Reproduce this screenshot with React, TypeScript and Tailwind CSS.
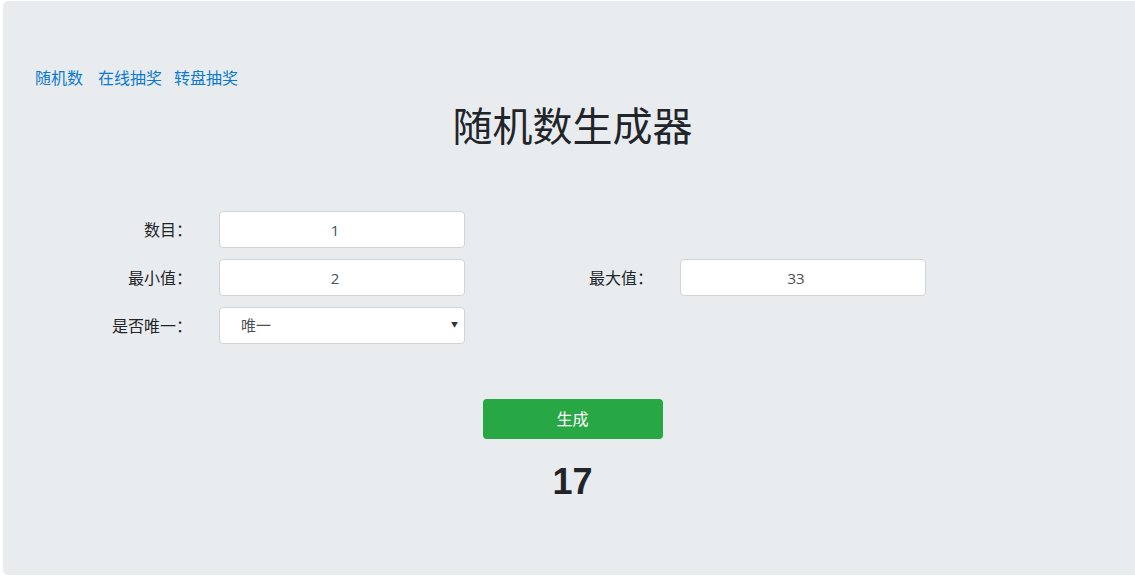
import React from "react";

const sans = { fontFamily: '"Open Sans", "Noto Sans CJK SC", sans-serif' };

function Field({ label, value, labelW }: { label: string; value: string; labelW: string }) {
  return (
    <div className="flex items-center">
      <div className={`${labelW} text-right text-[16px] text-[#212529] pr-[27px]`}>{label}</div>
      <input
        readOnly
        value={value}
        className="w-[246px] h-[37px] bg-white border border-[#ced4da] rounded-[4px] text-center pr-[14px] text-[15px] text-[#495057] outline-none"
      />
    </div>
  );
}

export default function App() {
  return (
    <div className="w-[1135px] h-[583px] bg-white overflow-hidden" style={sans}>
      <div className="ml-[3px] mt-[1px] w-[1139px] h-[574px] bg-[#e9ecef] rounded-[5px] pt-[65px] px-[32px]">
        <nav className="flex text-[16px] text-[#0b7ad1] leading-[24px]">
          <a className="mr-[15px]">随机数</a>
          <a className="mr-[12px]">在线抽奖</a>
          <a>转盘抽奖</a>
        </nav>
        <h1 className="mt-[10px] text-center text-[40px] leading-[48px] text-[#212529] font-normal" style={{ fontFamily: '"Noto Sans CJK SC", sans-serif' }}>
          随机数生成器
        </h1>
        <div className="mt-[63px] flex flex-col gap-[11px]">
          <Field label="数目：" value="1" labelW="w-[184px]" />
          <div className="flex items-center">
            <Field label="最小值：" value="2" labelW="w-[184px]" />
            <Field label="最大值：" value="33" labelW="w-[215px]" />
          </div>
          <div className="flex items-center">
            <div className="w-[184px] text-right text-[16px] text-[#212529] pr-[27px]">是否唯一：</div>
            <div className="relative w-[246px] h-[37px] bg-white border border-[#ced4da] rounded-[4px] flex items-center pl-[21px] text-[15px] text-[#495057]">
              唯一
              <span className="absolute right-[6px] top-[12px] text-[7px] text-[#333]">▼</span>
            </div>
          </div>
        </div>
        <div className="mt-[55px] flex justify-center">
          <button className="w-[180px] h-[40px] bg-[#28a745] text-white text-[16px] rounded-[4px]">生成</button>
        </div>
        <div
          className="mt-[20px] text-center text-[36px] font-bold leading-[46px] text-[#212529]"
          style={{ fontFamily: '"Liberation Sans", Arial, sans-serif' }}
        >
          17
        </div>
      </div>
    </div>
  );
}
